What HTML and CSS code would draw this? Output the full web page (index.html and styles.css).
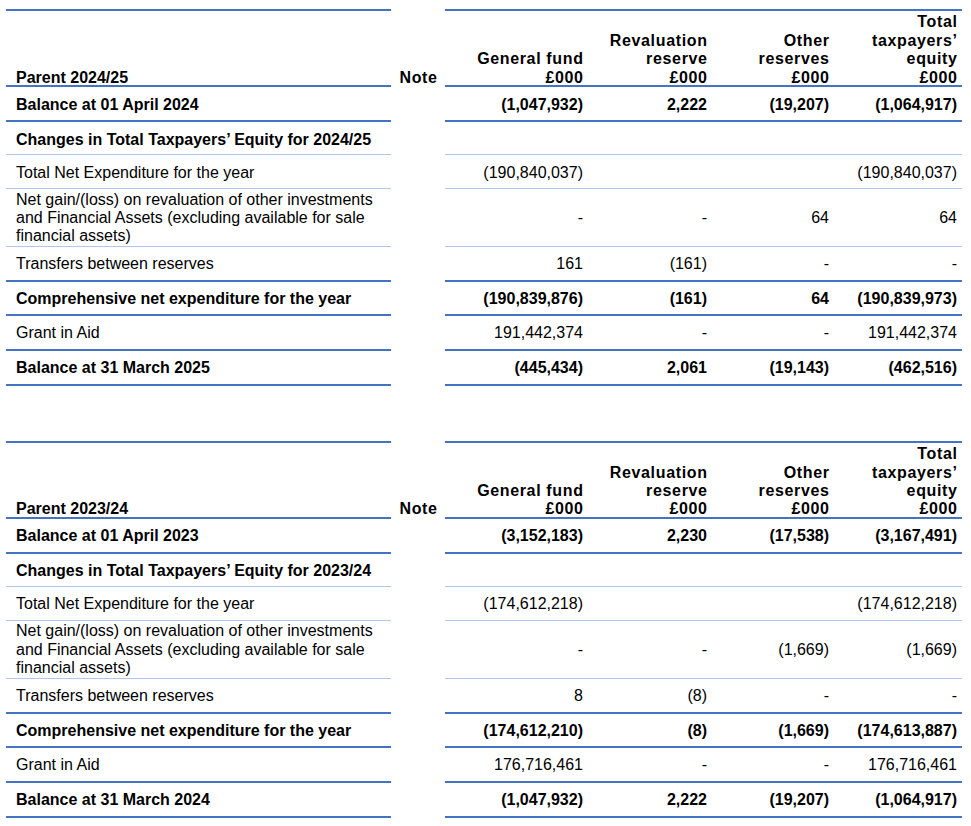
FILE: index.html
```html
<!DOCTYPE html>
<html lang="en">
<head>
<meta charset="utf-8">
<title>Statement of Changes in Taxpayers' Equity</title>
<link rel="stylesheet" href="styles.css">
</head>
<body>
<div class="page">
  <table class="soce">
    <colgroup>
      <col class="c-label"><col class="c-note"><col class="c-gf"><col class="c-rev"><col class="c-oth"><col class="c-tot">
    </colgroup>
    <thead>
      <tr>
        <th class="lbl"><span class="hd">Parent 2024/25</span></th>
        <th class="note"><span class="hd">Note</span></th>
        <th class="num"><span class="hd">General fund<br>£000</span></th>
        <th class="num"><span class="hd">Revaluation<br>reserve<br>£000</span></th>
        <th class="num"><span class="hd">Other<br>reserves<br>£000</span></th>
        <th class="num"><span class="hd">Total<br>taxpayers’<br>equity<br>£000</span></th>
      </tr>
    </thead>
    <tbody>
      <tr class="bold thick">
        <td class="lbl">Balance at 01 April 2024</td><td class="note"></td>
        <td class="num">(1,047,932)</td><td class="num">2,222</td><td class="num">(19,207)</td><td class="num">(1,064,917)</td>
      </tr>
      <tr class="bold thin short">
        <td class="lbl">Changes in Total Taxpayers’ Equity for 2024/25</td><td class="note"></td>
        <td class="num"></td><td class="num"></td><td class="num"></td><td class="num"></td>
      </tr>
      <tr class="thin">
        <td class="lbl">Total Net Expenditure for the year</td><td class="note"></td>
        <td class="num">(190,840,037)</td><td class="num"></td><td class="num"></td><td class="num">(190,840,037)</td>
      </tr>
      <tr class="thin multi">
        <td class="lbl">Net gain/(loss) on revaluation of other investments and Financial Assets (excluding available for sale financial assets)</td><td class="note"></td>
        <td class="num">-</td><td class="num">-</td><td class="num">64</td><td class="num">64</td>
      </tr>
      <tr class="thick">
        <td class="lbl">Transfers between reserves</td><td class="note"></td>
        <td class="num">161</td><td class="num">(161)</td><td class="num">-</td><td class="num">-</td>
      </tr>
      <tr class="bold thick short">
        <td class="lbl">Comprehensive net expenditure for the year</td><td class="note"></td>
        <td class="num">(190,839,876)</td><td class="num">(161)</td><td class="num">64</td><td class="num">(190,839,973)</td>
      </tr>
      <tr class="thick">
        <td class="lbl">Grant in Aid</td><td class="note"></td>
        <td class="num">191,442,374</td><td class="num">-</td><td class="num">-</td><td class="num">191,442,374</td>
      </tr>
      <tr class="bold thick">
        <td class="lbl">Balance at 31 March 2025</td><td class="note"></td>
        <td class="num">(445,434)</td><td class="num">2,061</td><td class="num">(19,143)</td><td class="num">(462,516)</td>
      </tr>
    </tbody>
  </table>

  <table class="soce second">
    <colgroup>
      <col class="c-label"><col class="c-note"><col class="c-gf"><col class="c-rev"><col class="c-oth"><col class="c-tot">
    </colgroup>
    <thead>
      <tr>
        <th class="lbl"><span class="hd">Parent 2023/24</span></th>
        <th class="note"><span class="hd">Note</span></th>
        <th class="num"><span class="hd">General fund<br>£000</span></th>
        <th class="num"><span class="hd">Revaluation<br>reserve<br>£000</span></th>
        <th class="num"><span class="hd">Other<br>reserves<br>£000</span></th>
        <th class="num"><span class="hd">Total<br>taxpayers’<br>equity<br>£000</span></th>
      </tr>
    </thead>
    <tbody>
      <tr class="bold thick">
        <td class="lbl">Balance at 01 April 2023</td><td class="note"></td>
        <td class="num">(3,152,183)</td><td class="num">2,230</td><td class="num">(17,538)</td><td class="num">(3,167,491)</td>
      </tr>
      <tr class="bold thin short">
        <td class="lbl">Changes in Total Taxpayers’ Equity for 2023/24</td><td class="note"></td>
        <td class="num"></td><td class="num"></td><td class="num"></td><td class="num"></td>
      </tr>
      <tr class="thin">
        <td class="lbl">Total Net Expenditure for the year</td><td class="note"></td>
        <td class="num">(174,612,218)</td><td class="num"></td><td class="num"></td><td class="num">(174,612,218)</td>
      </tr>
      <tr class="thin multi">
        <td class="lbl">Net gain/(loss) on revaluation of other investments and Financial Assets (excluding available for sale financial assets)</td><td class="note"></td>
        <td class="num">-</td><td class="num">-</td><td class="num">(1,669)</td><td class="num">(1,669)</td>
      </tr>
      <tr class="thick">
        <td class="lbl">Transfers between reserves</td><td class="note"></td>
        <td class="num">8</td><td class="num">(8)</td><td class="num">-</td><td class="num">-</td>
      </tr>
      <tr class="bold thick short">
        <td class="lbl">Comprehensive net expenditure for the year</td><td class="note"></td>
        <td class="num">(174,612,210)</td><td class="num">(8)</td><td class="num">(1,669)</td><td class="num">(174,613,887)</td>
      </tr>
      <tr class="thick">
        <td class="lbl">Grant in Aid</td><td class="note"></td>
        <td class="num">176,716,461</td><td class="num">-</td><td class="num">-</td><td class="num">176,716,461</td>
      </tr>
      <tr class="bold thick">
        <td class="lbl">Balance at 31 March 2024</td><td class="note"></td>
        <td class="num">(1,047,932)</td><td class="num">2,222</td><td class="num">(19,207)</td><td class="num">(1,064,917)</td>
      </tr>
    </tbody>
  </table>
</div>
</body>
</html>
```

FILE: styles.css
```css
html, body {
  margin: 0;
  padding: 0;
  background: #ffffff;
}

.page {
  padding: 9px 0 0 6px;
  font-family: "Liberation Sans", Arial, sans-serif;
  font-size: 16px;
  line-height: 18.4px;
  color: #000000;
}

.soce {
  width: 956px;
  table-layout: fixed;
  border-collapse: separate;
  border-spacing: 0;
}

.soce.second {
  margin-top: 55px;
}

.c-label { width: 385px; }
.c-note { width: 54px; }
.c-gf { width: 143px; }
.c-rev { width: 124px; }
.c-oth { width: 122px; }
.c-tot { width: 128px; }

.soce th,
.soce td {
  padding: 0;
  vertical-align: middle;
}

/* header */
.soce th {
  font-weight: bold;
  vertical-align: bottom;
  border-top: 2px solid #4472c4;
  border-bottom: 2px solid #4472c4;
  padding-top: 2.4px;
  padding-bottom: 0;
}

.soce th .hd {
  display: block;
  margin-bottom: -2px;
}

.soce th.lbl {
  text-align: left;
  padding-left: 10px;
}

.soce th.num {
  text-align: right;
  letter-spacing: 0.65px;
  padding-right: 4.4px;
}

.soce th.note {
  border-top-color: transparent;
  border-bottom-color: transparent;
  text-align: right;
  letter-spacing: 0.65px;
  padding-right: 7.4px;
}

/* body */
.soce td {
  padding-top: 8.6px;
  padding-bottom: 6px;
}

.soce tr.short td {
  padding-bottom: 5px;
}

.soce tr.multi td {
  padding-top: 1.6px;
  padding-bottom: 0;
}

.soce td.lbl {
  text-align: left;
  padding-left: 10px;
}

.soce td.num {
  text-align: right;
  padding-right: 5px;
  white-space: nowrap;
}

.soce tr.bold td {
  font-weight: bold;
}

.soce tr.thick td {
  border-bottom: 2px solid #4472c4;
}

.soce tr.thin td {
  border-bottom: 1px solid #b4c6e7;
}

.soce tr td.note {
  border-bottom-color: transparent;
}
```
